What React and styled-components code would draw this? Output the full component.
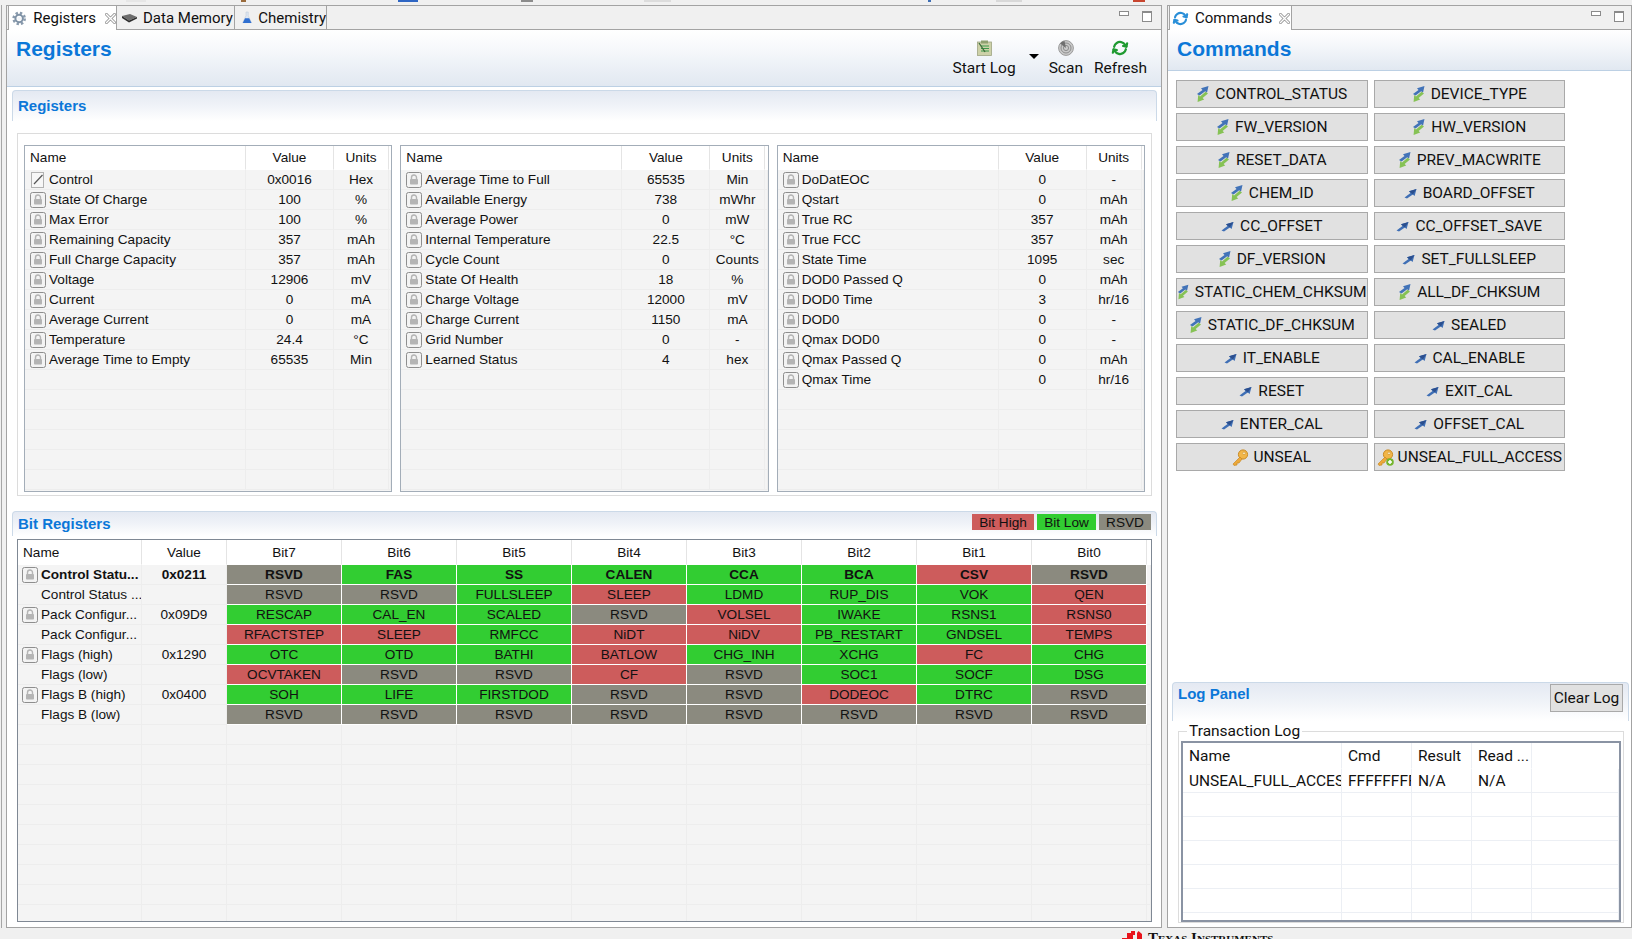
import React from 'react';
import styled, { createGlobalStyle } from 'styled-components';
import { RefreshCw } from 'lucide-react';

const UI_FONT = '"Roboto", "Liberation Sans", sans-serif';
const GRID_FONT = '"Liberation Sans", Arial, sans-serif';

const GlobalStyle = createGlobalStyle`
  html, body {
    margin: 0;
    padding: 0;
    background: #f0f0f0;
    overflow: hidden;
  }
  * {
    box-sizing: border-box;
  }
`;

const Page = styled.div`
  width: 1632px;
  height: 939px;
  display: flex;
  flex-direction: column;
  overflow: hidden;
  background: #f0f0f0;
  color: #111;
  font-family: ${UI_FONT};
`;

const TopStrip = styled.div`
  height: 5px;
  flex: none;
  display: flex;
  align-items: flex-start;
`;

const ToolbarScrap = styled.span`
  height: 2px;
  width: ${(p) => p.$w}px;
  margin-left: ${(p) => p.$gap}px;
  background: ${(p) => p.$color};
  flex: none;
`;

const Workbench = styled.div`
  height: 923px;
  flex: none;
  display: flex;
`;

const Rail = styled.div`
  width: 5px;
  margin-left: 1px;
  border-left: 1px solid #a6a6a6;
  flex: none;
`;

const Panel = styled.section`
  width: ${(p) => p.$width}px;
  margin-left: ${(p) => p.$gap || 0}px;
  flex: none;
  display: flex;
  flex-direction: column;
  background: #fff;
  border: 1px solid #a3a3a3;
  border-top: 0;
`;

const TabBar = styled.div`
  height: 25px;
  flex: none;
  display: flex;
  align-items: stretch;
  background: #f0f0f0;
  border-top: 1px solid #a3a3a3;
  border-bottom: 1px solid #a3a3a3;
`;

const Tab = styled.div`
  width: ${(p) => p.$width}px;
  display: flex;
  align-items: center;
  gap: ${(p) => (p.$active ? 7 : 6)}px;
  padding-left: ${(p) => p.$pad || 4}px;
  font-size: 15px;
  white-space: nowrap;
  border-right: 1px solid #a3a3a3;
  ${(p) => p.$active && `
    background: #fff;
    border-left: 1px solid #a3a3a3;
    margin-bottom: -1px;
    margin-left: 1px;
  `}
`;

const TabClose = styled.span`
  display: flex;
  margin-left: ${(p) => p.$gap}px;
`;

const WindowControls = styled.div`
  margin-left: auto;
  padding-right: ${(p) => p.$right}px;
  display: flex;
  align-items: flex-start;
  gap: 13px;
  padding-top: 5px;
`;

const MinButton = styled.span`
  width: 10px;
  height: 5px;
  border: 1px solid #8b8b8b;
  background: #fff;
`;

const MaxButton = styled.span`
  width: 10px;
  height: 11px;
  border: 1px solid #8b8b8b;
  border-top-width: 2px;
  background: #fff;
`;

const ViewHeader = styled.header`
  height: ${(p) => p.$height}px;
  flex: none;
  display: flex;
  justify-content: space-between;
  background: linear-gradient(#fff 0%, #f6f8fb 35%, #e1e8f1 100%);
  border-bottom: 1px solid #bcd0e4;
  padding-left: ${(p) => p.$pad}px;
`;

const ViewTitle = styled.h1`
  margin: ${(p) => p.$top}px 0 0;
  font: bold 21px ${GRID_FONT};
  color: #0b77d8;
`;

const Toolbar = styled.div`
  display: flex;
  align-items: flex-start;
  padding: 9px 14px 0 0;
`;

const ToolItem = styled.div`
  margin-left: ${(p) => p.$gap}px;
  display: flex;
  flex-direction: column;
  align-items: center;
  font-size: 15.5px;
  line-height: 20px;
  gap: 2px;
`;

const ToolIcon = styled.span`
  height: 17px;
  display: flex;
  align-items: center;
`;

const DropArrow = styled.span`
  margin: 15px 0 0 13px;
  width: 0;
  height: 0;
  border-left: 5px solid transparent;
  border-right: 5px solid transparent;
  border-top: 5px solid #000;
`;

const ViewBody = styled.div`
  flex: 1;
  min-height: 0;
  padding: 3px 4px 0 5px;
  display: flex;
  flex-direction: column;
`;

const SectionHead = styled.div`
  height: ${(p) => p.$height}px;
  flex: none;
  display: flex;
  justify-content: space-between;
  align-items: ${(p) => p.$align || 'flex-start'};
  padding: ${(p) => p.$padTop ?? 5}px 5px 0 5px;
  border: 1px solid #cbd9e8;
  border-bottom: 0;
  border-radius: 4px 4px 0 0;
  background: linear-gradient(#e4e9f2 0%, #f0f3f8 50%, #fff 100%);
`;

const SectionTitle = styled.h2`
  margin: 0;
  font: bold 15px/20px ${GRID_FONT};
  color: #0b77d8;
`;

const GroupBox = styled.div`
  margin: 12px 5px 0;
  height: 363px;
  flex: none;
  padding: 11px 6px 3px;
  border: 1px solid #dcdcdc;
  display: grid;
  grid-template-columns: repeat(3, 1fr);
  gap: 8px;
`;

const DataTable = styled.div`
  height: 100%;
  overflow: hidden;
  border: 1px solid #a3adb8;
  font: 13.6px ${GRID_FONT};
  background: #f4f4f4;
`;

const GridRow = styled.div`
  display: grid;
  grid-template-columns: ${(p) => p.$cols};
  height: ${(p) => p.$height || 20}px;
  align-items: stretch;
  background: ${(p) => (p.$head ? '#fff' : 'transparent')};
  font-weight: ${(p) => (p.$bold ? 700 : 400)};
`;

const Cell = styled.div`
  display: flex;
  align-items: center;
  justify-content: ${(p) => (p.$center ? 'center' : 'flex-start')};
  padding-left: ${(p) => p.$pad || 0}px;
  gap: 3px;
  white-space: nowrap;
  overflow: hidden;
  border-right: 1px solid ${(p) => (p.$head ? '#e4e4e4' : '#ededed')};
  border-bottom: 1px solid ${(p) => (p.$head ? 'transparent' : '#ededed')};
`;

const BitCell = styled.div`
  display: flex;
  align-items: center;
  justify-content: center;
  background: ${(p) => BIT_COLORS[p.$state]};
  border-right: 1px solid #fff;
  border-bottom: 1px solid #fff;
`;

const BIT_COLORS = {
  H: '#cd5c5c',
  L: '#32cd32',
  R: '#8b8a7f',
};

const Legend = styled.div`
  display: flex;
  gap: 3px;
`;

const LegendChip = styled.span`
  width: ${(p) => p.$width}px;
  height: 16px;
  display: flex;
  align-items: center;
  justify-content: center;
  font: 13.6px ${GRID_FONT};
  background: ${(p) => BIT_COLORS[p.$state]};
`;

const BitTable = styled(DataTable)`
  flex: none;
  margin: 3px 5px 0;
  height: 383px;
  border: 1px solid #7f8894;
`;

const CommandGrid = styled.div`
  padding: 9px 0 0 8px;
  display: grid;
  grid-template-columns: 191.5px 191.5px;
  grid-auto-rows: 28px;
  column-gap: 6px;
  row-gap: 5px;
`;

const CommandButton = styled.button`
  display: flex;
  align-items: center;
  justify-content: center;
  gap: ${(p) => p.$gap}px;
  padding: 0;
  font: 15.5px ${UI_FONT};
  color: #111;
  background: #e1e1e1;
  border: 1px solid #a9a9a9;
  border-radius: 0;
  white-space: nowrap;
`;

const LogSection = styled.div`
  margin: auto 2px 4px 4px;
  display: flex;
  flex-direction: column;
`;

const ClearButton = styled.button`
  width: 73px;
  height: 28px;
  padding: 0;
  font: 15.5px ${UI_FONT};
  color: #111;
  background: #e1e1e1;
  border: 1px solid #a9a9a9;
`;

const LogGroup = styled.fieldset`
  margin: 0 5px 0 6px;
  padding: 0 2px 1px;
  min-width: 0;
  height: 202px;
  border: 1px solid #dcdcdc;
`;

const LogLegend = styled.legend`
  margin-left: 6px;
  padding: 0 2px;
  font-size: 15.5px;
  line-height: 20px;
`;

const LogTable = styled.div`
  height: 181px;
  overflow: hidden;
  border: 2px solid #8a93a3;
  font-size: 15.5px;
`;

const LogCell = styled.div`
  display: flex;
  align-items: center;
  padding-left: ${(p) => p.$pad ?? 6}px;
  white-space: nowrap;
  overflow: hidden;
  border-right: 1px solid #eceff4;
  border-bottom: 1px solid ${(p) => (p.$head ? 'transparent' : '#eceff4')};
`;

const Footer = styled.footer`
  flex: 1;
  display: flex;
  align-items: flex-start;
  gap: 6px;
  padding: 3px 0 0 1122px;
  overflow: hidden;
`;

const FooterBrand = styled.span`
  font: 600 15px/14px "Liberation Serif", serif;
  font-variant: small-caps;
  color: #111;
  white-space: nowrap;
`;

const GearIcon = () => (
  <svg width="17" height="17" viewBox="0 0 17 17">
    <circle cx="8.5" cy="8.5" r="6.6" fill="none" stroke="#8a9bad" strokeWidth="3" strokeDasharray="2.8 2.4" />
    <circle cx="8.5" cy="8.5" r="4.4" fill="none" stroke="#7f92a6" strokeWidth="2.4" />
    <circle cx="8.5" cy="8.5" r="2.2" fill="#f2f5f8" />
  </svg>
);

const ChipIcon = () => (
  <svg width="16" height="10" viewBox="0 0 16 10">
    <path d="M1 3 L9 1 L16 4 L8 7.5 Z" fill="#6d6d6d" />
    <path d="M1 3 L8 7.5 L16 4 L16 5.5 L8 9.5 L1 5 Z" fill="#2d2d2d" />
  </svg>
);

const FlaskIcon = () => (
  <svg width="14" height="17" viewBox="0 0 14 17">
    <path d="M5.5 1 H8.5 V6 L13 15.5 H1 L5.5 6 Z" fill="#dfe7f2" stroke="#b9c6d6" strokeWidth="0.7" />
    <path d="M4.2 9.5 H9.8 L13 16 H1 Z" fill="#2f6fd0" />
  </svg>
);

const CloseIcon = () => (
  <svg width="11" height="11" viewBox="0 0 11 11">
    <path d="M1.5 1.5 L9.5 9.5 M9.5 1.5 L1.5 9.5" stroke="#8f8f8f" strokeWidth="3" strokeLinecap="square" />
    <path d="M1.5 1.5 L9.5 9.5 M9.5 1.5 L1.5 9.5" stroke="#fff" strokeWidth="1.4" strokeLinecap="square" />
  </svg>
);

const LockIcon = () => (
  <svg width="16" height="16" viewBox="0 0 16 16" style={{ flex: 'none' }}>
    <rect x="0.5" y="0.5" width="15" height="15" rx="2" fill="#f3f3f3" stroke="#8e8e8e" />
    <path d="M5.5 7 V5.5 a2.5 2.5 0 0 1 5 0 V7" fill="none" stroke="#b4b4b4" strokeWidth="1.4" />
    <rect x="4" y="7" width="8" height="5.5" rx="0.8" fill="#b4b4b4" />
  </svg>
);

const EditIcon = () => (
  <svg width="16" height="16" viewBox="0 0 16 16" style={{ flex: 'none' }}>
    <rect x="1.5" y="0.5" width="12" height="15" fill="#f7f7f7" stroke="#b2b2b2" />
    <path d="M4 12 L12.5 3" stroke="#555" strokeWidth="1.2" />
  </svg>
);

const LogIcon = () => (
  <svg width="15" height="16" viewBox="0 0 15 16">
    <rect x="0.5" y="2" width="14" height="13.5" fill="#cdd1a8" stroke="#9fa583" strokeWidth="0.8" />
    <rect x="4" y="0.5" width="7" height="3" fill="#8fa070" />
    <path d="M4 6 H12 M4 8.5 H12 M4 11 H12" stroke="#3d9a4b" strokeWidth="1.2" />
    <path d="M2 3 L8 12" stroke="#3c6b3a" strokeWidth="1.3" />
  </svg>
);

const ScanIcon = () => (
  <svg width="16" height="16" viewBox="0 0 16 16">
    <circle cx="8" cy="8" r="7.4" fill="#c9c9c9" stroke="#9b9b9b" />
    <circle cx="8" cy="8" r="5" fill="none" stroke="#8d8d8d" />
    <circle cx="8" cy="8" r="2.6" fill="none" stroke="#8d8d8d" />
    <path d="M8 8 L2 3.5 A7 7 0 0 1 6.5 1 Z" fill="#6f6f6f" />
  </svg>
);

const ArrowsIcon = ({ color, size }) => (
  <RefreshCw size={size} color={color} strokeWidth={3.4} style={{ transform: 'rotate(12deg)' }} />
);

const WriteIcon = () => (
  <svg width="13" height="11" viewBox="0 0 13 11">
    <path d="M0.5 9.5 L6.5 5 L5 3.2 L12.5 1 L10.6 8 L8.8 6.4 L3 10.6 Z" fill="#3f6fb5" />
    <path d="M5 3.2 L12.5 1 L8.8 6.4 Z" fill="#2b4f8f" />
  </svg>
);

const ReadWriteIcon = () => (
  <svg width="13" height="18" viewBox="0 0 13 18">
    <path d="M1 9 L6.5 5 L5 3.2 L12.5 1 L11 7.8 L9.2 6.2 L3.5 10.6 Z" fill="#4273b8" />
    <path d="M12 8.5 L6.6 13 L8.2 14.6 L1.6 17 L2.2 10 L4 11.6 L9.6 6.8 Z" fill="#86c255" />
  </svg>
);

const KeyIcon = ({ plus }) => (
  <svg width="17" height="17" viewBox="0 0 17 17">
    <circle cx="11" cy="5.5" r="4.6" fill="#f2b648" stroke="#c98a24" />
    <circle cx="12" cy="4.3" r="1.3" fill="#fff3d0" stroke="#c98a24" strokeWidth="0.6" />
    <path d="M8 8 L1 15 L2 16.4 L5 16 L5 14 L7 14 L10 10 Z" fill="#eda93a" stroke="#c98a24" strokeWidth="0.7" />
    {plus && <circle cx="13" cy="13" r="3.8" fill="#74b52d" />}
    {plus && <path d="M13 11 V15 M11 13 H15" stroke="#fff" strokeWidth="1.5" />}
  </svg>
);

const TiLogo = () => (
  <svg width="20" height="16" viewBox="0 0 20 16">
    <path d="M0 7 H5 V2 H9 L9 0 H13 V4 H11 V8 H15 V2 L16.5 0 L20 3 V12 H12 L9 16 H4 V10 H0 Z" fill="#e8141c" />
  </svg>
);

const SCRAPS = [
  [126, 20, '#e6e6e6'],
  [95, 5, '#9a6b3c'],
  [152, 20, '#2f66c4'],
  [103, 12, '#8c8c8c'],
  [111, 27, '#dcdcdc'],
  [257, 3, '#3f6fb5'],
  [65, 26, '#d8d8d8'],
  [111, 12, '#c8452f'],
];

const COLS_REG = ['221px 88px 55px 1fr', '221px 88px 55px 1fr', '221px 88px 55px 1fr'];

const REGISTER_TABLES = [
  [
    ['Control', '0x0016', 'Hex', 'edit'],
    ['State Of Charge', '100', '%'],
    ['Max Error', '100', '%'],
    ['Remaining Capacity', '357', 'mAh'],
    ['Full Charge Capacity', '357', 'mAh'],
    ['Voltage', '12906', 'mV'],
    ['Current', '0', 'mA'],
    ['Average Current', '0', 'mA'],
    ['Temperature', '24.4', '°C'],
    ['Average Time to Empty', '65535', 'Min'],
  ],
  [
    ['Average Time to Full', '65535', 'Min'],
    ['Available Energy', '738', 'mWhr'],
    ['Average Power', '0', 'mW'],
    ['Internal Temperature', '22.5', '°C'],
    ['Cycle Count', '0', 'Counts'],
    ['State Of Health', '18', '%'],
    ['Charge Voltage', '12000', 'mV'],
    ['Charge Current', '1150', 'mA'],
    ['Grid Number', '0', '-'],
    ['Learned Status', '4', 'hex'],
  ],
  [
    ['DoDatEOC', '0', '-'],
    ['Qstart', '0', 'mAh'],
    ['True RC', '357', 'mAh'],
    ['True FCC', '357', 'mAh'],
    ['State Time', '1095', 'sec'],
    ['DOD0 Passed Q', '0', 'mAh'],
    ['DOD0 Time', '3', 'hr/16'],
    ['DOD0', '0', '-'],
    ['Qmax DOD0', '0', '-'],
    ['Qmax Passed Q', '0', 'mAh'],
    ['Qmax Time', '0', 'hr/16'],
  ],
];

const BIT_ROWS = [
  { name: 'Control Statu...', value: '0x0211', lock: true, bold: true, bits: ['R:RSVD', 'L:FAS', 'L:SS', 'L:CALEN', 'L:CCA', 'L:BCA', 'H:CSV', 'R:RSVD'] },
  { name: 'Control Status ...', value: '', bits: ['R:RSVD', 'R:RSVD', 'L:FULLSLEEP', 'H:SLEEP', 'L:LDMD', 'L:RUP_DIS', 'L:VOK', 'H:QEN'] },
  { name: 'Pack Configur...', value: '0x09D9', lock: true, bits: ['L:RESCAP', 'L:CAL_EN', 'L:SCALED', 'R:RSVD', 'H:VOLSEL', 'L:IWAKE', 'L:RSNS1', 'H:RSNS0'] },
  { name: 'Pack Configur...', value: '', bits: ['H:RFACTSTEP', 'H:SLEEP', 'L:RMFCC', 'H:NiDT', 'H:NiDV', 'L:PB_RESTART', 'L:GNDSEL', 'H:TEMPS'] },
  { name: 'Flags (high)', value: '0x1290', lock: true, bits: ['L:OTC', 'L:OTD', 'L:BATHI', 'H:BATLOW', 'L:CHG_INH', 'L:XCHG', 'H:FC', 'L:CHG'] },
  { name: 'Flags (low)', value: '', bits: ['H:OCVTAKEN', 'R:RSVD', 'R:RSVD', 'H:CF', 'R:RSVD', 'L:SOC1', 'L:SOCF', 'L:DSG'] },
  { name: 'Flags B (high)', value: '0x0400', lock: true, bits: ['L:SOH', 'L:LIFE', 'L:FIRSTDOD', 'R:RSVD', 'R:RSVD', 'H:DODEOC', 'L:DTRC', 'R:RSVD'] },
  { name: 'Flags B (low)', value: '', bits: ['R:RSVD', 'R:RSVD', 'R:RSVD', 'R:RSVD', 'R:RSVD', 'R:RSVD', 'R:RSVD', 'R:RSVD'] },
];

const BIT_COLS = '124px 85px repeat(8, 115px) 1fr';

const COMMANDS = [
  ['CONTROL_STATUS', 'rw'], ['DEVICE_TYPE', 'rw'],
  ['FW_VERSION', 'rw'], ['HW_VERSION', 'rw'],
  ['RESET_DATA', 'rw'], ['PREV_MACWRITE', 'rw'],
  ['CHEM_ID', 'rw'], ['BOARD_OFFSET', 'w'],
  ['CC_OFFSET', 'w'], ['CC_OFFSET_SAVE', 'w'],
  ['DF_VERSION', 'rw'], ['SET_FULLSLEEP', 'w'],
  ['STATIC_CHEM_CHKSUM', 'rw'], ['ALL_DF_CHKSUM', 'rw'],
  ['STATIC_DF_CHKSUM', 'rw'], ['SEALED', 'w'],
  ['IT_ENABLE', 'w'], ['CAL_ENABLE', 'w'],
  ['RESET', 'w'], ['EXIT_CAL', 'w'],
  ['ENTER_CAL', 'w'], ['OFFSET_CAL', 'w'],
  ['UNSEAL', 'key'], ['UNSEAL_FULL_ACCESS', 'keyplus'],
];

const LOG_COLS = '159px 70px 60px 60px 1fr';

const CommandIcon = ({ kind }) => {
  if (kind === 'rw') return <ReadWriteIcon />;
  if (kind === 'w') return <WriteIcon />;
  return <KeyIcon plus={kind === 'keyplus'} />;
};

const RegisterTable = ({ rows, cols }) => (
  <DataTable>
    <GridRow $cols={cols} $height={24} $head>
      <Cell $head $pad={5}>Name</Cell>
      <Cell $head $center>Value</Cell>
      <Cell $head $center>Units</Cell>
    </GridRow>
    {Array.from({ length: 16 }, (_, i) => {
      const row = rows[i];
      return (
        <GridRow $cols={cols} key={i}>
          <Cell $pad={5}>
            {row && (row[3] === 'edit' ? <EditIcon /> : <LockIcon />)}
            {row && row[0]}
          </Cell>
          <Cell $center>{row && row[1]}</Cell>
          <Cell $center>{row && row[2]}</Cell>
          <Cell />
        </GridRow>
      );
    })}
  </DataTable>
);

const BitRegisterTable = () => (
  <BitTable>
    <GridRow $cols={BIT_COLS} $height={25} $head>
      <Cell $head $pad={5}>Name</Cell>
      <Cell $head $center>Value</Cell>
      {[7, 6, 5, 4, 3, 2, 1, 0].map((n) => (
        <Cell $head $center key={n}>Bit{n}</Cell>
      ))}
    </GridRow>
    {Array.from({ length: 18 }, (_, i) => {
      const row = BIT_ROWS[i];
      if (!row) {
        return (
          <GridRow $cols={BIT_COLS} key={i}>
            {Array.from({ length: 11 }, (_, c) => <Cell key={c} />)}
          </GridRow>
        );
      }
      return (
        <GridRow $cols={BIT_COLS} $bold={row.bold} key={i}>
          <Cell $pad={row.lock ? 4 : 23}>
            {row.lock && <LockIcon />}
            {row.name}
          </Cell>
          <Cell $center>{row.value}</Cell>
          {row.bits.map((bit, c) => {
            const [state, label] = bit.split(':');
            return <BitCell $state={state} key={c}>{label}</BitCell>;
          })}
          <Cell />
        </GridRow>
      );
    })}
  </BitTable>
);

const LogPanel = () => (
  <LogSection>
    <SectionHead $height={39} $padTop={1}>
      <SectionTitle>Log Panel</SectionTitle>
      <ClearButton>Clear Log</ClearButton>
    </SectionHead>
    <LogGroup>
      <LogLegend>Transaction Log</LogLegend>
      <LogTable>
        <GridRow $cols={LOG_COLS} $height={26}>
          <LogCell $head>Name</LogCell>
          <LogCell $head>Cmd</LogCell>
          <LogCell $head>Result</LogCell>
          <LogCell $head>Read ...</LogCell>
        </GridRow>
        <GridRow $cols={LOG_COLS} $height={24}>
          <LogCell>UNSEAL_FULL_ACCESS</LogCell>
          <LogCell>FFFFFFFF</LogCell>
          <LogCell>N/A</LogCell>
          <LogCell>N/A</LogCell>
          <LogCell />
        </GridRow>
        {[0, 1, 2, 3, 4, 5].map((i) => (
          <GridRow $cols={LOG_COLS} $height={24} key={i}>
            <LogCell />
            <LogCell />
            <LogCell />
            <LogCell />
            <LogCell />
          </GridRow>
        ))}
      </LogTable>
    </LogGroup>
  </LogSection>
);

const App = () => (
  <Page>
    <GlobalStyle />
    <TopStrip>
      {SCRAPS.map(([gap, w, color], i) => (
        <ToolbarScrap $gap={gap} $w={w} $color={color} key={i} />
      ))}
    </TopStrip>
    <Workbench>
      <Rail />
      <Panel $width={1156}>
        <TabBar>
          <Tab $active $width={109} $pad={3}>
            <GearIcon />
            Registers
            <TabClose $gap={2}><CloseIcon /></TabClose>
          </Tab>
          <Tab $width={118}><ChipIcon />Data Memory</Tab>
          <Tab $width={92} $pad={7}><FlaskIcon />Chemistry</Tab>
          <WindowControls $right={9}>
            <MinButton />
            <MaxButton />
          </WindowControls>
        </TabBar>
        <ViewHeader $height={57} $pad={9}>
          <ViewTitle $top={7}>Registers</ViewTitle>
          <Toolbar>
            <ToolItem $gap={0}>
              <ToolIcon><LogIcon /></ToolIcon>
              Start Log
            </ToolItem>
            <DropArrow />
            <ToolItem $gap={10}>
              <ToolIcon><ScanIcon /></ToolIcon>
              Scan
            </ToolItem>
            <ToolItem $gap={11}>
              <ToolIcon><ArrowsIcon color="#1f9a31" size={16} /></ToolIcon>
              Refresh
            </ToolItem>
          </Toolbar>
        </ViewHeader>
        <ViewBody>
          <SectionHead $height={31}>
            <SectionTitle>Registers</SectionTitle>
          </SectionHead>
          <GroupBox>
            {REGISTER_TABLES.map((rows, i) => (
              <RegisterTable rows={rows} cols={COLS_REG[i]} key={i} />
            ))}
          </GroupBox>
          <SectionHead $height={25} $padTop={2} style={{ marginTop: 15 }}>
            <SectionTitle>Bit Registers</SectionTitle>
            <Legend>
              <LegendChip $state="H" $width={62}>Bit High</LegendChip>
              <LegendChip $state="L" $width={59}>Bit Low</LegendChip>
              <LegendChip $state="R" $width={52}>RSVD</LegendChip>
            </Legend>
          </SectionHead>
          <BitRegisterTable />
        </ViewBody>
      </Panel>
      <Panel $width={465} $gap={5}>
        <TabBar>
          <Tab $active $width={123} $pad={3}>
            <ArrowsIcon color="#2a8fd8" size={15} />
            Commands
            <TabClose $gap={0}><CloseIcon /></TabClose>
          </Tab>
          <WindowControls $right={7}>
            <MinButton />
            <MaxButton />
          </WindowControls>
        </TabBar>
        <ViewHeader $height={41} $pad={9}>
          <ViewTitle $top={7}>Commands</ViewTitle>
        </ViewHeader>
        <CommandGrid>
          {COMMANDS.map(([label, kind]) => (
            <CommandButton $gap={kind.startsWith('key') ? 4 : 6} key={label}>
              <CommandIcon kind={kind} />
              {label}
            </CommandButton>
          ))}
        </CommandGrid>
        <LogPanel />
      </Panel>
    </Workbench>
    <Footer>
      <TiLogo />
      <FooterBrand>Texas Instruments</FooterBrand>
    </Footer>
  </Page>
);

export default App;
